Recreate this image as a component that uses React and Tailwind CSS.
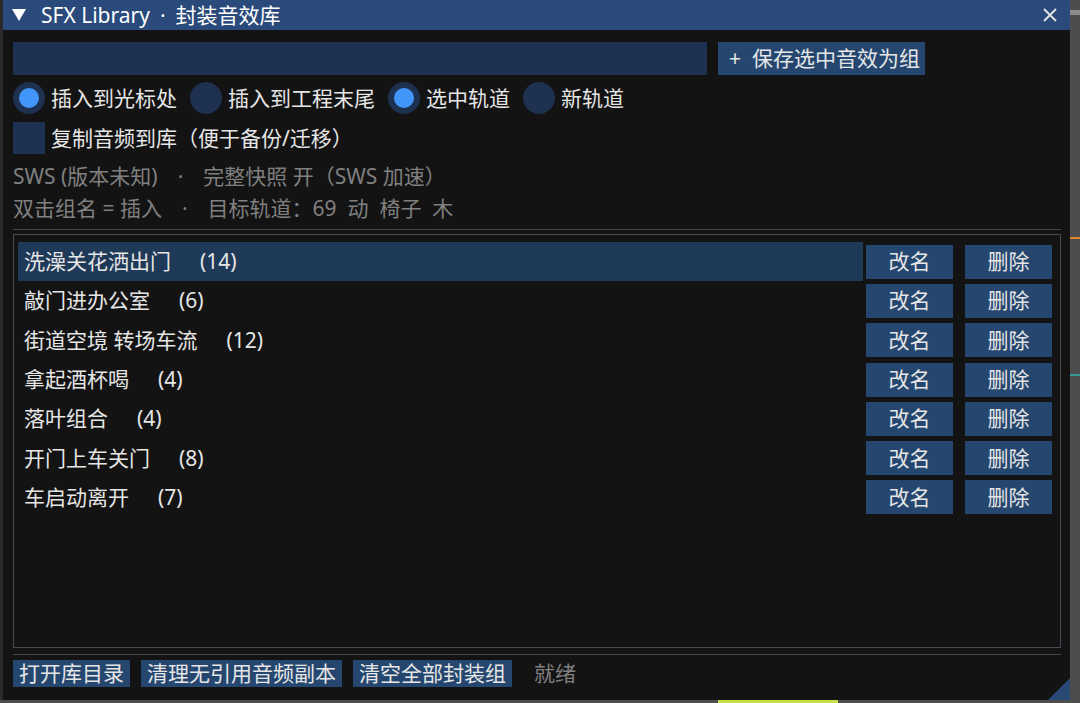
import React, { useState } from "react";

const groups = [
    { name: "洗澡关花洒出门", count: 14 },
    { name: "敲门进办公室", count: 6 },
    { name: "街道空境 转场车流", count: 12 },
    { name: "拿起酒杯喝", count: 4 },
    { name: "落叶组合", count: 4 },
    { name: "开门上车关门", count: 8 },
    { name: "车启动离开", count: 7 },
];

const modes = [
    { label: "插入到光标处", group: "pos", value: "cursor" },
    { label: "插入到工程末尾", group: "pos", value: "end" },
    { label: "选中轨道", group: "track", value: "sel" },
    { label: "新轨道", group: "track", value: "new" },
];

function Radio({ checked, label, onClick }) {
    return (
        <div className="flex items-center cursor-pointer" onClick={onClick}>
            <div className="w-[32px] h-[32px] rounded-full bg-[#1e3150] flex items-center justify-center">
                {checked && <div className="w-[20px] h-[20px] rounded-full bg-[#4296fa]" />}
            </div>
            <span className="ml-[6px]">{label}</span>
        </div>
    );
}

export default function App() {
    const [pos, setPos] = useState("cursor");
    const [track, setTrack] = useState("sel");
    const [selected, setSelected] = useState(0);

    const isChecked = (m) => (m.group === "pos" ? pos === m.value : track === m.value);
    const pick = (m) => (m.group === "pos" ? setPos(m.value) : setTrack(m.value));

    return (
        <div className="w-[1080px] h-[703px] bg-[#4b4b4b] flex flex-col overflow-hidden font-['Noto_Sans','Noto_Sans_CJK_SC',sans-serif] text-[21px] leading-none text-[#e6e6e6]">
            <div className="flex h-[700px]">
                <div className="w-[3px] bg-[#2a2a2a]" />

                {/* window */}
                <div className="w-[1067px] h-[700px] bg-[#131313] flex flex-col relative">
                    {/* title bar */}
                    <div className="h-[30px] bg-[#294a7a] flex items-center pl-[9px] pr-[10px] text-white">
                        <svg width="14" height="12" viewBox="0 0 14 12">
                            <polygon points="0,0 14,0 7,12" fill="#ffffff" />
                        </svg>
                        <span className="ml-[15px]">SFX Library</span>
                        <span className="mx-[10px]">·</span>
                        <span>封装音效库</span>
                        <svg className="ml-auto mr-[3px]" width="14" height="14" viewBox="0 0 14 14">
                            <path d="M1 1 L13 13 M13 1 L1 13" stroke="#e6e6e6" strokeWidth="1.8" />
                        </svg>
                    </div>

                    <div className="pl-[10px] flex flex-col">
                        {/* name input + save */}
                        <div className="flex mt-[12px]">
                            <div className="w-[694px] h-[33px] bg-[#1e3150]" />
                            <button className="ml-[11px] w-[207px] h-[33px] bg-[#25476f] flex items-center pl-[11px]">
                                <span>+</span>
                                <span className="ml-[11px]">保存选中音效为组</span>
                            </button>
                        </div>

                        {/* insert options */}
                        <div className="flex items-center gap-[13px] h-[32px] mt-[7px]">
                            {modes.map((m) => (
                                <Radio key={m.value} label={m.label} checked={isChecked(m)} onClick={() => pick(m)} />
                            ))}
                        </div>

                        <div className="flex items-center h-[32px] mt-[8px]">
                            <div className="w-[32px] h-[32px] bg-[#1e3150]" />
                            <span className="ml-[6px]">复制音频到库（便于备份/迁移）</span>
                        </div>

                        {/* status lines */}
                        <div className="flex items-center h-[32px] mt-[6px] text-[#808080]">
                            <span>SWS (版本未知)</span>
                            <span className="mx-[20px]">·</span>
                            <span className="whitespace-pre">完整快照 开（SWS 加速）</span>
                        </div>
                        <div className="flex items-center h-[32px] text-[#808080]">
                            <span>双击组名 = 插入</span>
                            <span className="mx-[20px]">·</span>
                            <span className="whitespace-pre">目标轨道：69  动  椅子  木</span>
                        </div>

                        <div className="w-[1048px] h-px bg-[#45454f] mt-[5px]" />

                        {/* group list */}
                        <div className="w-[1048px] h-[414px] mt-[4px] border border-[#4a4a56] pt-[7px] pl-[4px] pr-[8px] flex flex-col">
                            {groups.map((g, i) => (
                                <div key={g.name} className="flex items-center h-[39.3px] shrink-0">
                                    <div
                                        className={
                                            i === selected
                                                ? "flex-1 h-full flex items-center pl-[6px] bg-[#1f3958] cursor-pointer"
                                                : "flex-1 h-full flex items-center pl-[6px] cursor-pointer"
                                        }
                                        onClick={() => setSelected(i)}
                                    >
                                        <span>{g.name}</span>
                                        <span className="ml-[29px]">({g.count})</span>
                                    </div>
                                    <button className="ml-[3px] w-[87px] h-[34px] bg-[#25476f] flex items-center justify-center">改名</button>
                                    <button className="ml-[12px] w-[87px] h-[34px] bg-[#25476f] flex items-center justify-center">删除</button>
                                </div>
                            ))}
                        </div>

                        <div className="w-[1048px] h-px bg-[#45454f] mt-[6px]" />

                        {/* footer */}
                        <div className="flex items-center mt-[5px] h-[27px]">
                            <button className="h-[27px] px-[6px] bg-[#25476f] flex items-center">打开库目录</button>
                            <button className="ml-[11px] h-[27px] px-[6px] bg-[#25476f] flex items-center">清理无引用音频副本</button>
                            <button className="ml-[11px] h-[27px] px-[6px] bg-[#25476f] flex items-center">清空全部封装组</button>
                            <span className="ml-[22px] text-[#808080]">就绪</span>
                        </div>
                    </div>

                    {/* resize grip */}
                    <svg className="absolute right-0 bottom-0" width="22" height="22" viewBox="0 0 22 22">
                        <polygon points="22,0 22,22 0,22" fill="#294a72" />
                    </svg>
                </div>

                {/* behind the window */}
                <div className="flex-1 flex flex-col bg-[#4d4d4d]">
                    <div className="h-[10px]" />
                    <div className="h-[5px] bg-[#8a8a8a]" />
                    <div className="h-[222px]" />
                    <div className="h-[2px] bg-[#e08a2a]" />
                    <div className="h-[135px]" />
                    <div className="h-[2px] bg-[#3a9a9a]" />
                </div>
            </div>
            <div className="h-[3px] bg-[#4d4d4d] flex">
                <div className="ml-[718px] w-[120px] bg-[#c6e04a]" />
            </div>
        </div>
    );
}
